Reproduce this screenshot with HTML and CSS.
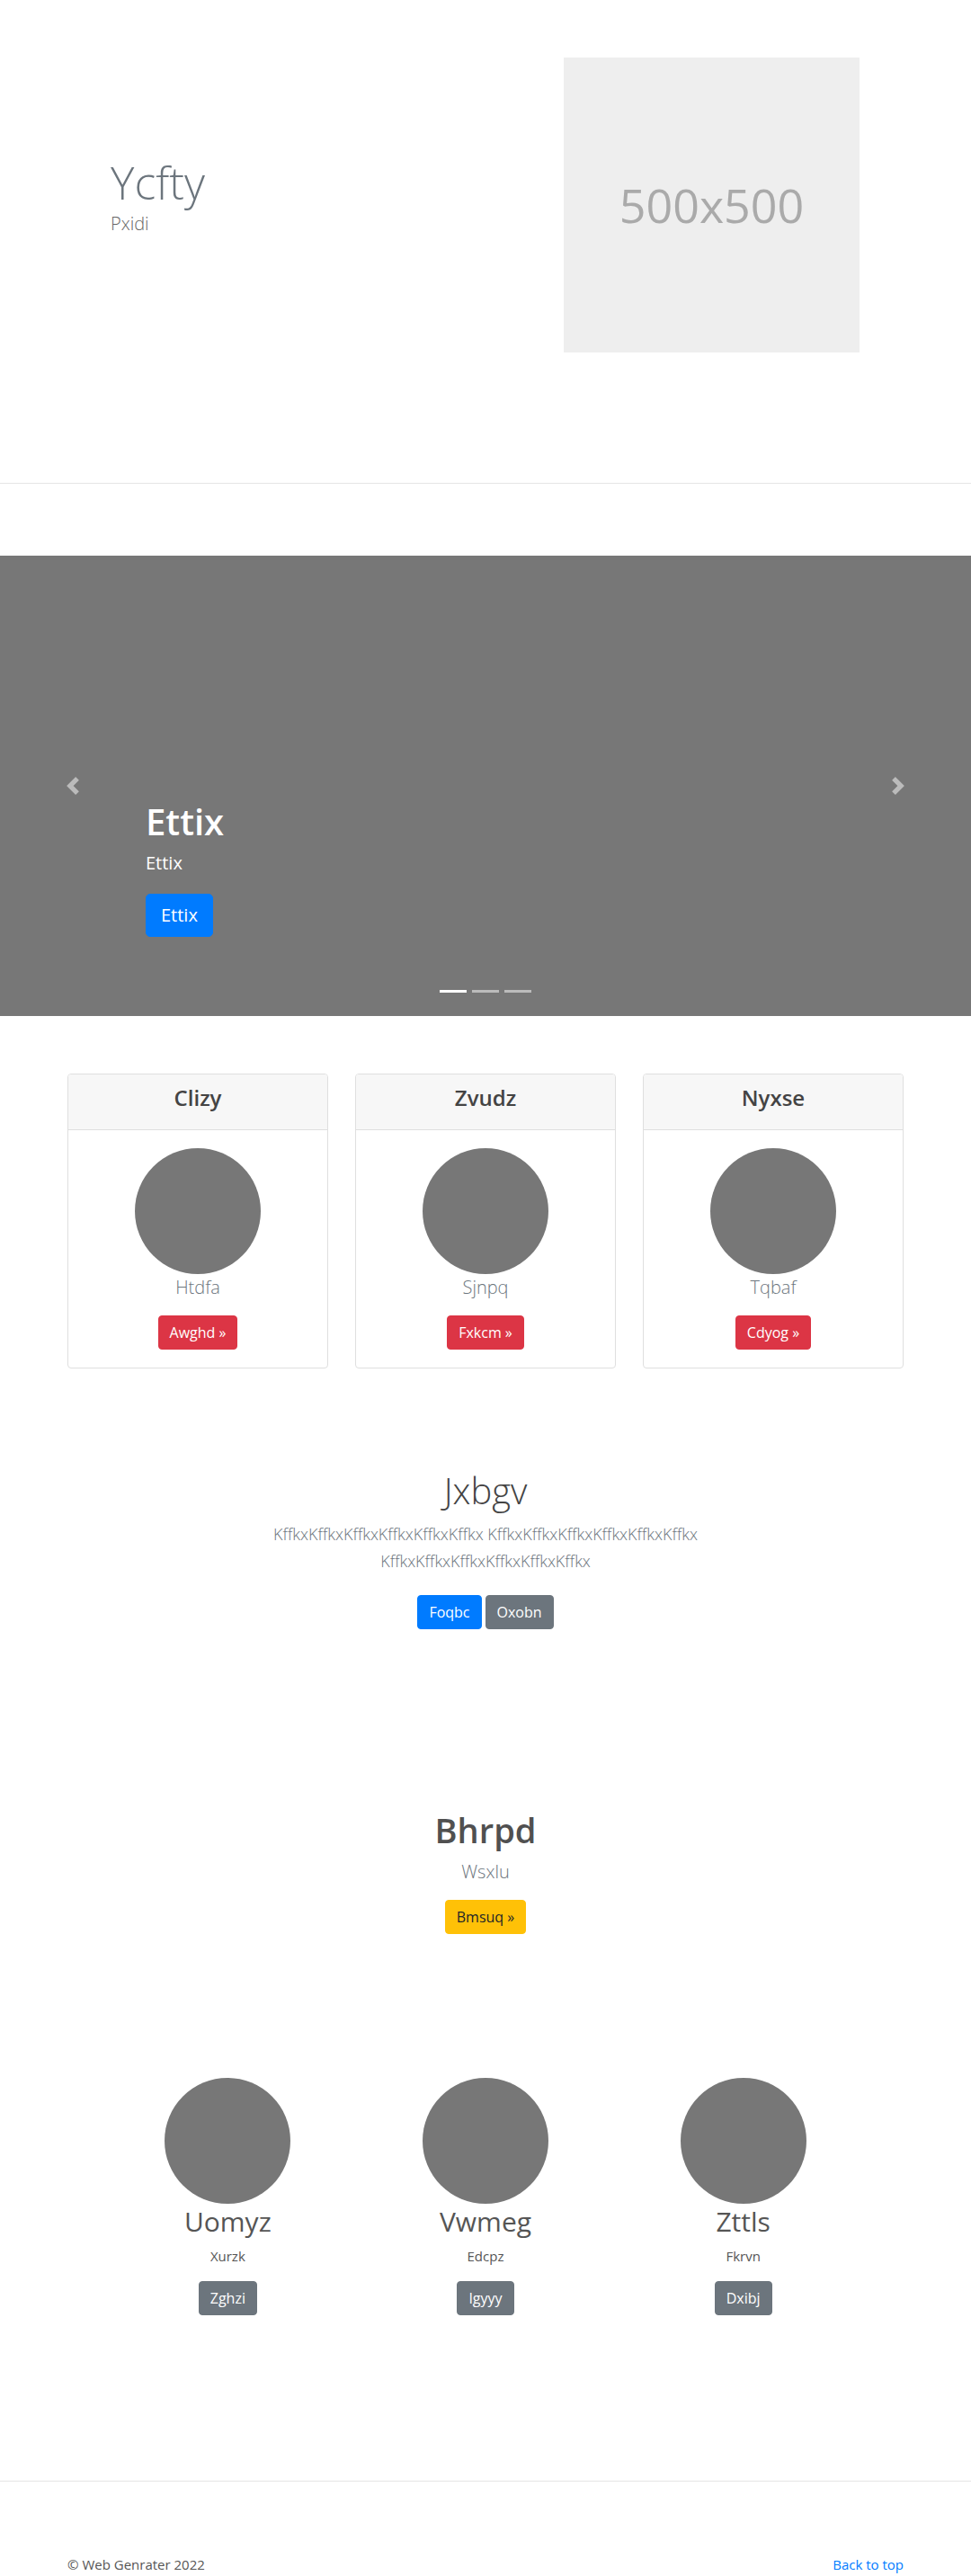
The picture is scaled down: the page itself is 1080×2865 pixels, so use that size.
FILE: index.html
```html
<!DOCTYPE html>
<html lang="en">
<head>
<meta charset="utf-8">
<title>Ycfty</title>
<link rel="stylesheet" href="styles.css">
</head>
<body>
<header class="hero">
  <div class="hero-text">
    <h1 class="hero-title">Ycfty</h1>
    <p class="hero-sub">Pxidi</p>
  </div>
  <div class="hero-img">500x500</div>
</header>
<hr class="rule">
<section class="carousel">
  <a class="ctrl ctrl-prev" href="#"><svg viewBox="0 0 8 8"><path d="M5.25 0l-4 4 4 4 1.5-1.5-2.5-2.5 2.5-2.5-1.5-1.5z"/></svg></a>
  <a class="ctrl ctrl-next" href="#"><svg viewBox="0 0 8 8"><path d="M2.75 0l-1.5 1.5 2.5 2.5-2.5 2.5 1.5 1.5 4-4-4-4z"/></svg></a>
  <div class="caption">
    <h2 class="caption-title">Ettix</h2>
    <p class="caption-text">Ettix</p>
    <a class="btn btn-lg btn-primary" href="#">Ettix</a>
  </div>
  <ol class="indicators"><li class="active"></li><li></li><li></li></ol>
</section>
<section class="cards">
  <div class="card">
    <div class="card-head"><h4 class="card-title">Clizy</h4></div>
    <div class="card-body">
      <div class="circle"></div>
      <p class="lead-muted">Htdfa</p>
      <a class="btn btn-danger" href="#">Awghd &raquo;</a>
    </div>
  </div>
  <div class="card">
    <div class="card-head"><h4 class="card-title">Zvudz</h4></div>
    <div class="card-body">
      <div class="circle"></div>
      <p class="lead-muted">Sjnpq</p>
      <a class="btn btn-danger" href="#">Fxkcm &raquo;</a>
    </div>
  </div>
  <div class="card">
    <div class="card-head"><h4 class="card-title">Nyxse</h4></div>
    <div class="card-body">
      <div class="circle"></div>
      <p class="lead-muted">Tqbaf</p>
      <a class="btn btn-danger" href="#">Cdyog &raquo;</a>
    </div>
  </div>
</section>
<section class="jumbo">
  <h1 class="jumbo-title">Jxbgv</h1>
  <p class="jumbo-lead">KffkxKffkxKffkxKffkxKffkxKffkx KffkxKffkxKffkxKffkxKffkxKffkx KffkxKffkxKffkxKffkxKffkxKffkx</p>
  <div class="btn-row">
    <a class="btn btn-primary" href="#">Foqbc</a>
    <a class="btn btn-secondary" href="#">Oxobn</a>
  </div>
</section>
<section class="promo">
  <h2 class="promo-title">Bhrpd</h2>
  <p class="promo-lead">Wsxlu</p>
  <a class="btn btn-warning" href="#">Bmsuq &raquo;</a>
</section>
<section class="marketing">
  <div class="mk-col">
    <div class="circle"></div>
    <h2 class="mk-title">Uomyz</h2>
    <p class="mk-text">Xurzk</p>
    <a class="btn btn-secondary" href="#">Zghzi</a>
  </div>
  <div class="mk-col">
    <div class="circle"></div>
    <h2 class="mk-title">Vwmeg</h2>
    <p class="mk-text">Edcpz</p>
    <a class="btn btn-secondary" href="#">Igyyy</a>
  </div>
  <div class="mk-col">
    <div class="circle"></div>
    <h2 class="mk-title">Zttls</h2>
    <p class="mk-text">Fkrvn</p>
    <a class="btn btn-secondary" href="#">Dxibj</a>
  </div>
</section>
<hr class="rule rule-bottom">
<footer class="footer">
  <p class="footer-copy">&copy; Web Genrater 2022</p>
  <a class="footer-link" href="#">Back to top</a>
</footer>
</body>
</html>
```
FILE: styles.css
```css
* { box-sizing: border-box; }

body {
  margin: 0;
  font-family: "Open Sans", "Noto Sans", sans-serif;
  font-size: 16px;
  line-height: 1.5;
  color: #555;
  background: #fff;
}

a { text-decoration: none; }

/* hero */
.hero {
  display: flex;
  height: 537px;
}
.hero-text {
  width: 627px;
  flex: none;
  padding: 173px 0 0 123px;
}
.hero-title {
  margin: 0 0 1px;
  font-size: 50px;
  font-weight: 300;
  line-height: 1.2;
  color: #6c757d;
}
.hero-sub {
  margin: 0;
  font-size: 20px;
  font-weight: 300;
  line-height: 30px;
  color: #666;
}
.hero-img {
  margin-top: 64px;
  width: 329px;
  height: 328px;
  background: #eee;
  color: #aaa;
  font-size: 52px;
  display: flex;
  align-items: center;
  justify-content: center;
}

.rule {
  margin: 0;
  border: 0;
  border-top: 1px solid #e5e5e5;
  height: 0;
}

/* carousel */
.carousel {
  position: relative;
  margin-top: 80px;
  height: 512px;
  background: #777;
}
.ctrl {
  position: absolute;
  top: 0;
  bottom: 0;
  width: 162px;
  display: flex;
  align-items: center;
  justify-content: center;
  opacity: .5;
}
.ctrl-prev { left: 0; }
.ctrl-next { right: 0; }
.ctrl svg { width: 20px; height: 20px; fill: #fff; }

.caption {
  position: absolute;
  left: 162px;
  right: 162px;
  bottom: 88px;
  color: #fff;
}
.caption-title {
  margin: 0 0 7px;
  font-size: 40px;
  font-weight: 600;
  line-height: 1.2;
}
.caption-text {
  margin: 0 0 19px;
  font-size: 20px;
  line-height: 30px;
}

.indicators {
  position: absolute;
  left: 0;
  right: 0;
  bottom: 26px;
  margin: 0;
  padding: 0;
  list-style: none;
  display: flex;
  justify-content: center;
  gap: 6px;
}
.indicators li {
  width: 30px;
  height: 3px;
  background: rgba(255, 255, 255, .5);
}
.indicators li.active { background: #fff; }

/* buttons */
.btn {
  display: inline-block;
  padding: 6px 12px;
  font-size: 16px;
  line-height: 24px;
  border: 1px solid transparent;
  border-radius: 4px;
  color: #fff;
}
.btn-lg {
  padding: 8px 16px;
  font-size: 20px;
  line-height: 30px;
  border-radius: 5px;
}
.btn-primary { background: #007bff; border-color: #007bff; }
.btn-secondary { background: #6c757d; border-color: #6c757d; }
.btn-danger { background: #dc3545; border-color: #dc3545; }
.btn-warning { background: #ffc107; border-color: #ffc107; color: #212529; }

/* cards */
.cards {
  display: grid;
  grid-template-columns: repeat(3, 290px);
  gap: 30px;
  justify-content: center;
  margin-top: 64px;
}
.card {
  border: 1px solid #dfdfdf;
  border-radius: 4px;
  overflow: hidden;
  text-align: center;
}
.card-head {
  background: #f7f7f7;
  border-bottom: 1px solid #dfdfdf;
  padding: 12px 20px;
}
.card-title {
  margin: 0 0 8px;
  font-size: 24px;
  font-weight: 600;
  line-height: 1.2;
  color: #444;
}
.card-body { padding: 20px; }

.circle {
  width: 140px;
  height: 140px;
  border-radius: 50%;
  background: #777;
  margin: 0 auto;
}
.lead-muted {
  margin: 0 0 16px;
  font-size: 20px;
  font-weight: 300;
  line-height: 30px;
  color: #6c757d;
}

/* jumbotron */
.jumbo {
  max-width: 610px;
  margin: 112px auto 0;
  text-align: center;
}
.jumbo-title {
  margin: 0 0 9px;
  font-size: 40px;
  font-weight: 300;
  line-height: 1.2;
  color: #444;
}
.jumbo-lead {
  margin: 0;
  font-size: 18px;
  font-weight: 300;
  line-height: 30px;
  color: #6c757d;
}
.btn-row {
  display: flex;
  justify-content: center;
  gap: 4px;
  margin-top: 23px;
}

/* promo */
.promo {
  margin-top: 201px;
  text-align: center;
}
.promo-title {
  margin: 0 0 9px;
  font-size: 38px;
  font-weight: 600;
  line-height: 1.2;
  color: #505050;
}
.promo-lead {
  margin: 0 0 16px;
  font-size: 20px;
  font-weight: 300;
  line-height: 30px;
  color: #6c757d;
}

/* marketing */
.marketing {
  display: grid;
  grid-template-columns: repeat(3, 1fr);
  width: 860px;
  margin: 160px auto 0;
  text-align: center;
}
.mk-title {
  margin: 2px 0 8px;
  font-size: 30px;
  font-weight: 400;
  line-height: 36px;
  color: #555;
}
.mk-text {
  margin: 0 0 16px;
  font-size: 15px;
  line-height: 24px;
  color: #555;
}

.rule-bottom { margin-top: 184px; }

/* footer */
.footer {
  width: 930px;
  margin: 80px auto 0;
  display: flex;
  justify-content: space-between;
  align-items: flex-start;
  padding-bottom: 40px;
}
.footer-copy {
  margin: 0;
  font-size: 15px;
  line-height: 24px;
  color: #555;
}
.footer-link {
  font-size: 15px;
  line-height: 24px;
  color: #007bff;
}
```
